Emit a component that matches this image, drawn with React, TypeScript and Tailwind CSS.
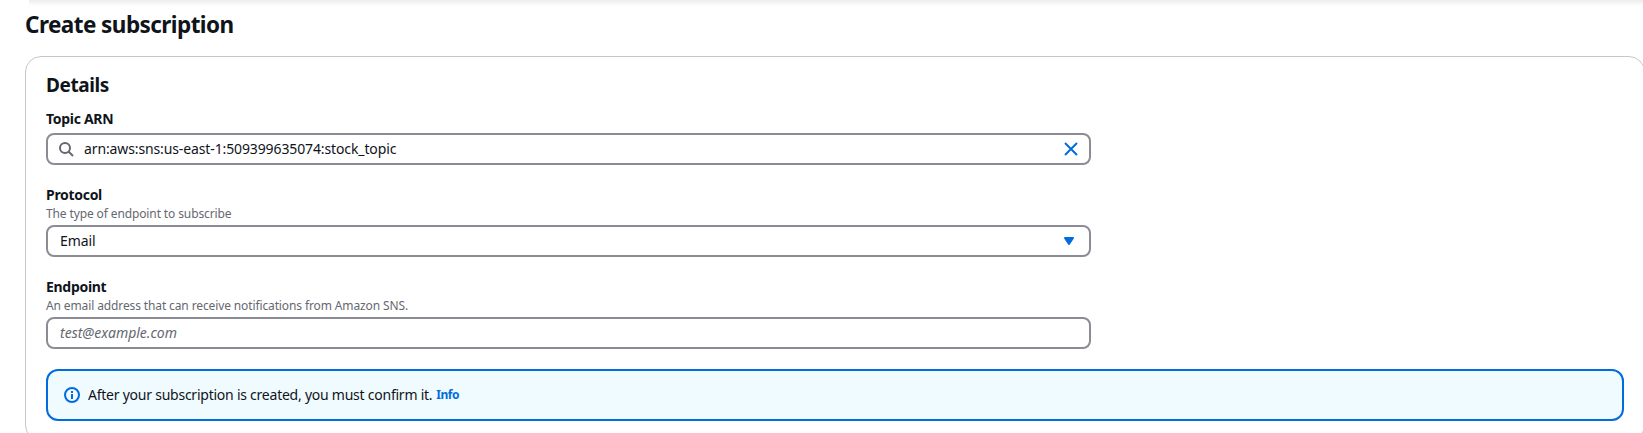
import type { ReactNode } from "react";

function SearchIcon() {
  return (
    <svg className="size-4 shrink-0" viewBox="0 0 16 16" fill="none" stroke="#656871" strokeWidth="2">
      <circle cx="7" cy="7" r="5" />
      <path d="m15 15-4.5-4.5" />
    </svg>
  );
}

function CloseIcon() {
  return (
    <svg className="size-4 shrink-0" viewBox="0 0 16 16" fill="none" stroke="#006ce0" strokeWidth="2">
      <path d="m2 2 12 12M14 2 2 14" />
    </svg>
  );
}

function CaretIcon() {
  return (
    <svg className="size-4 shrink-0" viewBox="0 0 16 16" fill="#006ce0" stroke="#006ce0" strokeWidth="2" strokeLinejoin="round">
      <path d="M4 5h8l-4 6-4-6Z" />
    </svg>
  );
}

function InfoIcon() {
  return (
    <svg className="size-4 shrink-0" viewBox="0 0 16 16" fill="none" stroke="#006ce0" strokeWidth="2">
      <circle cx="8" cy="8" r="7" />
      <path d="M8 12V7M8 6V4" />
    </svg>
  );
}

function Hint({ children }: { children: ReactNode }) {
  return <p className="-mb-px pt-px text-xs/4 tracking-[-0.12px] text-[#656871]">{children}</p>;
}

function Field({ label, hint, children }: { label: string; hint?: string; children: ReactNode }) {
  return (
    <div>
      <div className="text-sm/5 font-bold tracking-[-0.3px]">{label}</div>
      {hint && <Hint>{hint}</Hint>}
      <div className="mt-1 flex h-8 items-center rounded-lg border-2 border-[#8c8c94] bg-white text-sm">{children}</div>
    </div>
  );
}

export default function App() {
  return (
    <div className="h-[433px] w-full overflow-hidden bg-white font-['Noto_Sans',sans-serif] text-[#0f141a]">
      <div className="ml-[29px] h-1.5 bg-linear-to-b from-[#ededee] to-white" />
      <h1 className="ml-[25px] mt-1 h-[46px] text-[22.5px]/[30px] font-bold tracking-[-0.56px]">Create subscription</h1>
      <section className="ml-[25px] h-[385px] w-[1620px] rounded-2xl border border-[#c6c6cd] px-5 pt-4">
        <h2 className="mb-3 text-[19px]/6 font-bold tracking-[-0.4px]">Details</h2>
        <div className="flex w-[1045px] flex-col gap-5">
          <Field label="Topic ARN">
            <div className="flex w-full items-center px-2.5">
              <SearchIcon />
              <span className="ml-2.5 flex-1 tracking-[-0.12px]">arn:aws:sns:us-east-1:509399635074:stock_topic</span>
              <CloseIcon />
            </div>
          </Field>
          <Field label="Protocol" hint="The type of endpoint to subscribe">
            <div className="flex w-full items-center px-3">
              <span className="flex-1 tracking-[-0.1px]">Email</span>
              <CaretIcon />
            </div>
          </Field>
          <Field label="Endpoint" hint="An email address that can receive notifications from Amazon SNS.">
            <span className="pl-3 text-[#656871] italic">test@example.com</span>
          </Field>
        </div>
        <div className="mt-5 flex h-[52px] w-[1578px] items-center rounded-xl border-2 border-[#006ce0] bg-[#f0fbff] pl-4">
          <InfoIcon />
          <span className="ml-2 text-sm/5 tracking-[-0.24px]">After your subscription is created, you must confirm it.</span>
          <span className="ml-1 text-xs/5 font-bold tracking-[-0.5px] text-[#006ce0]">Info</span>
        </div>
      </section>
    </div>
  );
}
